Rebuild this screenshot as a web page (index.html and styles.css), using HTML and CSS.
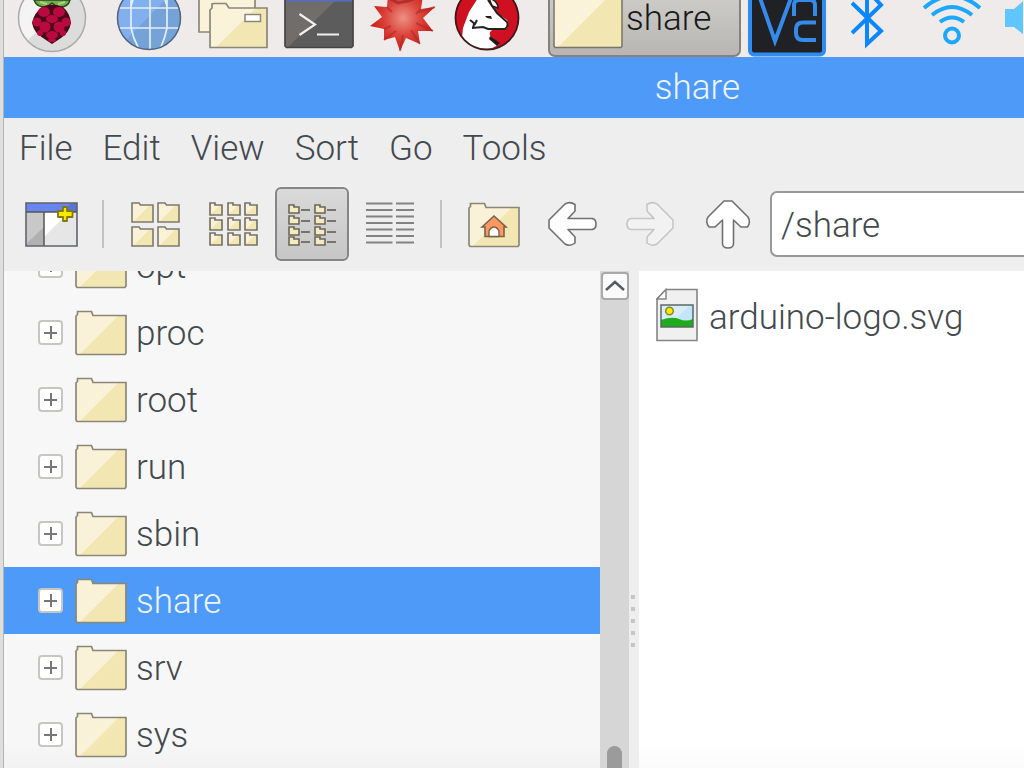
FILE: index.html
```html
<!DOCTYPE html>
<html lang="en">
<head>
<meta charset="utf-8">
<title>share</title>
<link rel="stylesheet" href="styles.css">
</head>
<body>
<svg class="defs" aria-hidden="true">
  <symbol id="folder" viewBox="0 0 52 46">
    <path d="M1.500 5.500 2.500 4.500V1.500H16.500L18 5H50.500V44.500H1.500Z" fill="#f2e6b2"/>
    <path d="M1.500 5.500 2.500 4.500V1.500H16.500L18 5H44L5 44H1.500Z" fill="#f9f2d9"/>
    <path d="M1 6 2.500 4.500V1.500H16.500L18 5.500H51V43L50 44.500H2L1 43Z" fill="none" stroke="#8a8779" stroke-width="1.700"/>
  </symbol>
  <symbol id="folder-m" viewBox="0 0 23 21">
    <path d="M1 1H8L9.500 3H22V20H1Z" fill="#f2e6b2"/>
    <path d="M1 1H8L9.500 3H19L3 19H1Z" fill="#f9f2d9"/>
    <path d="M1 1H8L9.500 3H22V20H1Z" fill="none" stroke="#7d7a6c" stroke-width="1.600"/>
  </symbol>
  <symbol id="folder-s" viewBox="0 0 14 14">
    <path d="M1 1H6V3H13V13H1Z" fill="#f2e6b2"/>
    <path d="M1 1H6V3H11L3 11H1Z" fill="#f9f2d9"/>
    <path d="M1 1H6V3H13V13H1Z" fill="none" stroke="#77746a" stroke-width="1.700"/>
  </symbol>
  <symbol id="folder-xs" viewBox="0 0 12 10">
    <path d="M1 1H6V3H11V9H1Z" fill="#f6ebc0" stroke="#69675c" stroke-width="1.600"/>
  </symbol>
</svg>

<div class="desktop">
  <div class="edge"></div>
  <div class="screen">
    <header class="taskbar">
      <button class="launch" aria-label="Menu"><svg width="70" height="57" viewBox="0 0 70 57">
        <circle cx="35" cy="18" r="33.500" fill="#dcdcdc"/>
        <path d="M1.500 18A33.500 33.500 0 0 1 30 -15L60 -8 10 41A33.500 33.500 0 0 1 1.500 18Z" fill="#f4f4f4"/>
        <circle cx="35" cy="18" r="33.500" fill="none" stroke="#aaa" stroke-width="1.500"/>
        <path d="M17 0Q20 8 30 7L35 3 40 7Q51 8 53 0Z" fill="#74ad50" stroke="#284b1b" stroke-width="1.500"/>
        <path d="M23 2 30 4M48 2 41 4" stroke="#a5d877" stroke-width="2"/>
        <path d="M25 7Q35 2 46 7 53 13 54 23 52 33 44 38L35 44 26 38Q17 33 15 23 17 13 25 7Z" fill="#4d0719"/>
        <g fill="#b80a40"><ellipse cx="27" cy="12" rx="6" ry="5"/><ellipse cx="42" cy="12" rx="6" ry="5"/><ellipse cx="35" cy="19" rx="6" ry="4"/><circle cx="20" cy="22" r="4.500"/><circle cx="49" cy="22" r="4.500"/><circle cx="28" cy="27" r="5.500"/><circle cx="42" cy="27" r="5.500"/><ellipse cx="35" cy="35" rx="6" ry="4"/><circle cx="23" cy="33" r="3"/><circle cx="46" cy="33" r="3"/><ellipse cx="35" cy="40" rx="4" ry="2"/></g>
      </svg></button>
      <button class="launch" aria-label="Web browser"><svg width="66" height="57" viewBox="0 0 66 57">
        <circle cx="33" cy="18" r="32" fill="#75a3d8"/>
        <path d="M55 -6 10 40A32 32 0 0 1 33 -14Z" fill="#82afee"/>
        <path d="M2 8H64M2 28H64M34 0V50M15 0V28Q17 38 22 47M51 0V28Q49 38 45 47M17 0 15 6M49 0 51 6" fill="none" stroke="#e3eefb" stroke-width="1.700"/>
        <circle cx="33" cy="18" r="31.500" fill="none" stroke="#52657d" stroke-width="1.500"/>
      </svg></button>
      <button class="launch" aria-label="File manager"><svg width="70" height="57" viewBox="0 0 70 57">
        <path d="M1 -5H57V32H1Z" fill="#faf3da" stroke="#8a8779" stroke-width="1.700"/>
        <path d="M12 10 14 8V4L16 3.500H28L31 8H69V47.500H12Z" fill="#f2e6b2"/>
        <path d="M12 10 14 8V4L16 3.500H28L31 8H58L18 47H12Z" fill="#faf3da"/>
        <path d="M12 10 14 8V4L16 3.500H28L31 8H69V47.500H12Z" fill="none" stroke="#8a8779" stroke-width="1.700"/>
        <path d="M47 14.500H62.500V21.500H47Z" fill="#fff" stroke="#8a8779" stroke-width="1.500"/>
      </svg></button>
      <button class="launch" aria-label="Terminal"><svg width="70" height="57" viewBox="0 0 70 57">
        <path d="M1 -4H69V46L67 48H3L1 46Z" fill="#5c5c5c"/>
        <path d="M1 0H52L4 47H1Z" fill="#716d6b"/>
        <path d="M1 0H69" stroke="#506fc5" stroke-width="3"/>
        <path d="M1 -4V46L2.500 47.500H67.500L69 46V-4" fill="none" stroke="#444" stroke-width="1.700"/>
        <path d="M15.500 14 31 24.500 15.500 35M33 34.500H55" fill="none" stroke="#f0f0f0" stroke-width="2.200"/>
      </svg></button>
      <button class="launch" aria-label="Mathematica"><svg width="66" height="57" viewBox="0 0 66 57">
        <defs><radialGradient id="star" gradientUnits="userSpaceOnUse" cx="33" cy="18" r="34"><stop offset="0" stop-color="#ec9184"/><stop offset=".5" stop-color="#dc463e"/><stop offset="1" stop-color="#cc1712"/></radialGradient></defs>
        <path d="M18 -5 17 7 4 6 12 17 0 26 14 29 14 40 25 37 30 51 36 38 50 44 48 31 63 31 53 18 65 7 51 9 53 -5Z" fill="url(#star)"/>
        <path d="M14 29 21 26M14 40 26 31M30 51 33 35M50 44 41 30M63 31 46 23M65 7 46 13M17 7 22 12M51 9 46 14" fill="none" stroke="#ad2a26" stroke-width="2" opacity=".6"/>
        <path d="M21 -1 28 3 38 1 46 -2" fill="none" stroke="#96211e" stroke-width="3" opacity=".6"/>
      </svg></button>
      <button class="launch" aria-label="Wolfram"><svg width="70" height="57" viewBox="0 0 70 57">
        <circle cx="35" cy="18" r="31.500" fill="#cf1020"/>
        <path d="M10 38 11 28 17 12 26 -2H36L45 13 55 20Q58 25 54 29L40 30Q36 33 39 37L47 44Q41 49 34 49 19 49 10 38Z" fill="#fff"/>
        <path d="M37 -2Q46 1 46 8L40 6Z" fill="#f8f8ed" stroke="#222" stroke-width="1.500"/>
        <path d="M20 28 31 27 36 29 53 29Q57 26 55 22L45 13 36 0M18 20 23 24 25 20M22 24 21 28" fill="none" stroke="#222" stroke-width="2"/>
        <path d="M33 16H39L40 19 35 18ZM38 36 48 43 45 46 37 39Z" fill="#1c1c1c"/>
        <circle cx="35" cy="18" r="31.500" fill="none" stroke="#3e171b" stroke-width="1.800"/>
      </svg></button>
      <button class="task"><svg width="70" height="57" viewBox="0 0 70 57">
        <path d="M1 -3H69V46L68 47.500H2L1 46Z" fill="#f2e6b2"/>
        <path d="M1 0H52L5 47H2L1 46Z" fill="#faf3da"/>
        <path d="M1 -3V46L2 47.500H68L69 46V-3" fill="none" stroke="#77746b" stroke-width="1.500"/>
      </svg><span>share</span></button>
      <button class="launch vnc" aria-label="VNC server"><svg width="78" height="57" viewBox="0 0 78 57">
        <rect x="2" y="-8" width="74" height="62.500" rx="4" fill="#202124" stroke="#2f8cf0" stroke-width="4"/>
        <path d="M12 -2 27 41 43 -2M46 16V5Q46 0 51 0H62Q67 0 67 5V16M68 22.500H55Q48 22.500 48 29V33Q48 40 55 40H68" fill="none" stroke="#358aea" stroke-width="4"/>
      </svg></button>
      <button class="launch bluetooth" aria-label="Bluetooth"><svg width="34" height="57" viewBox="0 0 34 57">
        <path d="M1 3 30 31 16 44V-10L30 5 1 33" fill="none" stroke="#0a86ff" stroke-width="4"/>
      </svg></button>
      <button class="launch wifi" aria-label="Wireless network"><svg width="58" height="57" viewBox="0 0 58 57">
        <g fill="none" stroke="#1ba7fb" stroke-width="4"><path d="M1 8Q29 -16 57 8M9 15Q29 -1 49 15M17 22Q29 13 41 22"/><circle cx="29" cy="35.500" r="7"/></g>
      </svg></button>
      <button class="launch" aria-label="Volume"><svg width="18" height="57" viewBox="0 0 18 57">
        <path d="M0 9H9L24 -4V39L9 27H0Z" fill="#5fc6ff"/>
      </svg></button>
    </header>

    <h1 class="title">share</h1>

    <nav class="menu">
      <button>File</button><button>Edit</button><button>View</button><button>Sort</button><button>Go</button><button>Tools</button>
    </nav>

    <div class="toolbar">
      <button class="tool" aria-label="New tab"><svg width="54" height="54" viewBox="0 0 54 54">
        <path d="M1 6H52V49H1Z" fill="#e6e6e6"/><path d="M19 15H44L19 40Z" fill="#fff"/>
        <path d="M1 15H19V49H1Z" fill="#b0b0b0"/><path d="M1 15H19V30L1 47Z" fill="#c8c8c8"/>
        <path d="M1 6H52V15H1Z" fill="#5b73d2"/><path d="M1 6H46L37 15H1Z" fill="#6886ef"/>
        <path d="M1 15H52M19 15V49" stroke="#555" stroke-width="1.500"/>
        <path d="M1 6H52V49H1Z" fill="none" stroke="#60636b" stroke-width="1.600"/>
        <path d="M38 10H42V14H47.500V20H42V24H38V20H33V14H38Z" fill="#fbe800" stroke="#81790b" stroke-width="1.800" stroke-linejoin="round"/>
      </svg></button>
      <span class="sep"></span>
      <button class="tool" aria-label="Icon view"><svg width="54" height="54" viewBox="0 0 54 54">
        <use href="#folder-m" x="2" y="5" width="23" height="21"/><use href="#folder-m" x="28" y="5" width="23" height="21"/><use href="#folder-m" x="2" y="29" width="23" height="21"/><use href="#folder-m" x="28" y="29" width="23" height="21"/>
      </svg></button>
      <button class="tool" aria-label="Thumbnail view"><svg width="54" height="54" viewBox="0 0 54 54">
        <g id="trio"><use href="#folder-s" x="2" y="5" width="14" height="14"/><use href="#folder-s" x="20" y="5" width="14" height="14"/><use href="#folder-s" x="37" y="5" width="14" height="14"/></g>
        <use href="#trio" y="15"/><use href="#trio" y="30"/>
      </svg></button>
      <button class="tool active" aria-label="Compact view" aria-pressed="true"><svg width="54" height="54" viewBox="0 0 54 54">
        <g id="pair"><use href="#folder-xs" x="3" y="7" width="12" height="10"/><use href="#folder-xs" x="29" y="7" width="12" height="10"/><path d="M16 13H25M42 13H51" stroke="#77746a" stroke-width="1.800"/></g>
        <use href="#pair" y="11"/><use href="#pair" y="22"/><use href="#pair" y="32"/>
      </svg></button>
      <button class="tool" aria-label="Detailed list view"><svg width="54" height="54" viewBox="0 0 54 54">
        <path d="M3 6.500H29.500M33 6.500H51M3 13H29.500M33 13H51M3 19.500H29.500M33 19.500H51M3 26H29.500M33 26H51M3 32.500H29.500M33 32.500H51M3 39H29.500M33 39H51M3 45.500H29.500M33 45.500H51" stroke="#828282" stroke-width="1.800"/>
      </svg></button>
      <span class="sep"></span>
      <button class="tool" aria-label="Home folder"><svg width="54" height="54" viewBox="0 0 54 54">
        <use href="#folder" x="1" y="5" width="52" height="46"/>
        <path d="M15 30 27 19 39 30H37V39.500H18V30Z" fill="#ff985c" stroke="#77624f" stroke-width="1.600"/>
        <path d="M22 39.500V34Q24 30 27 30T32 34V39.500Z" fill="#fff" stroke="#77624f" stroke-width="1.400"/>
      </svg></button>
      <button class="tool" aria-label="Back"><svg width="54" height="54" viewBox="0 0 54 54">
        <path id="arrow" d="M20 7Q25 4 30 7.500V14L23 21.500H47Q51 22 51 27T47 32.500H23L30 40V46Q25 50 20 47L4 31V23Z" fill="#fff" stroke="#707070" stroke-width="1.600" stroke-linejoin="round"/>
      </svg></button>
      <button class="tool" aria-label="Forward" disabled><svg width="54" height="54" viewBox="0 0 54 54">
        <path d="M34 7Q29 4 24 7.500V14L31 21.500H8Q4 22 4 27T8 32.500H31L24 40V46Q29 50 34 47L50 31V23Z" fill="#f2f2f2" stroke="#c6c6c6" stroke-width="1.600" stroke-linejoin="round"/>
      </svg></button>
      <button class="tool" aria-label="Up"><svg width="54" height="54" viewBox="0 0 54 54">
        <use href="#arrow" transform="translate(54 0) rotate(90)"/>
      </svg></button>
      <input class="path" type="text" value="/share" aria-label="Location">
    </div>

    <main class="panes">
      <ul class="tree">
        <li><button class="expand" aria-label="Expand opt"></button><svg width="52" height="46"><use href="#folder"/></svg><span>opt</span></li>
        <li><button class="expand" aria-label="Expand proc"></button><svg width="52" height="46"><use href="#folder"/></svg><span>proc</span></li>
        <li><button class="expand" aria-label="Expand root"></button><svg width="52" height="46"><use href="#folder"/></svg><span>root</span></li>
        <li><button class="expand" aria-label="Expand run"></button><svg width="52" height="46"><use href="#folder"/></svg><span>run</span></li>
        <li><button class="expand" aria-label="Expand sbin"></button><svg width="52" height="46"><use href="#folder"/></svg><span>sbin</span></li>
        <li class="selected"><button class="expand" aria-label="Expand share"></button><svg width="52" height="46"><use href="#folder"/></svg><span>share</span></li>
        <li><button class="expand" aria-label="Expand srv"></button><svg width="52" height="46"><use href="#folder"/></svg><span>srv</span></li>
        <li><button class="expand" aria-label="Expand sys"></button><svg width="52" height="46"><use href="#folder"/></svg><span>sys</span></li>
      </ul>
      <div class="scrollbar">
        <button aria-label="Scroll up"><svg width="24" height="24" viewBox="0 0 24 24"><path d="M3 16 12 8 21 16" fill="none" stroke="#555b5e" stroke-width="2.500"/></svg></button>
        <div class="thumb"></div>
      </div>
      <div class="splitter"><i></i><i></i><i></i><i></i><i></i></div>
      <section class="files">
        <div class="file">
          <svg width="42" height="54" viewBox="0 0 42 54">
            <path d="M10 1.500H41V52.500H1V11Z" fill="#f0f0f0" stroke="#858585" stroke-width="1.600"/>
            <path d="M10 1.500V11H1Z" fill="#fff" stroke="#858585" stroke-width="1.500"/>
            <path d="M5 17H37V39H5Z" fill="#c3e5f5"/><path d="M5 17H34L20 31H5Z" fill="#d7eefa"/>
            <path d="M5 32Q16 28 23 31T37 31V39H5Z" fill="#1eac1e"/>
            <path d="M5 17H37V39H5Z" fill="none" stroke="#586a64" stroke-width="1.500"/>
            <circle cx="13.500" cy="23" r="3.800" fill="#fbe800" stroke="#8b852b" stroke-width="1.500"/>
          </svg>
          <span>arduino-logo.svg</span>
        </div>
      </section>
    </main>
  </div>
</div>
</body>
</html>
```
FILE: styles.css
```css
* { box-sizing: border-box; }

body {
  margin: 0;
  overflow: hidden;
  font: 300 35px/42px Roboto, sans-serif;
  color: #43494d;
  background: #eee;
}

button, input {
  font: inherit;
  color: inherit;
  margin: 0;
  padding: 0;
  border: 0;
  background: none;
}

svg { display: block; flex: none; }
.defs { position: absolute; width: 0; height: 0; }

.desktop { display: flex; height: 100vh; }

.edge {
  flex: 0 0 4px;
  background: #dededc;
  border-right: 1px solid #b4b4b4;
}

.screen {
  flex: 1;
  min-width: 0;
  display: flex;
  flex-direction: column;
}

.taskbar {
  flex: 0 0 57px;
  display: flex;
  align-items: flex-start;
  gap: 16px;
  padding-left: 13px;
  overflow: hidden;
  background: #eeebea;
}

.launch { flex: none; height: 57px; }
.launch:nth-child(2) { margin-left: 13px; }

.task {
  flex: 0 0 193px;
  height: 57px;
  display: flex;
  align-items: flex-start;
  gap: 3px;
  margin-left: 10px;
  padding-left: 3px;
  border: 2px solid #85827e;
  border-top: 0;
  border-radius: 0 0 7px 7px;
  background: linear-gradient(#cbcac6, #b8b6b2);
  color: #17191a;
  line-height: 38px;
}

.vnc { margin-left: -9px; }
.bluetooth { margin-left: 9px; }
.wifi { margin-left: 22px; margin-right: 8px; }

.title {
  flex: none;
  margin: 0;
  padding: 10px 0 9px 367px;
  background: #4d9af8;
  color: #eef5ff;
  font-size: 35px;
  font-weight: 300;
  text-align: center;
}

.menu {
  flex: none;
  display: flex;
  gap: 30px;
  padding: 10px 15px;
}

.toolbar {
  flex: none;
  display: flex;
  align-items: center;
  gap: 4px;
  padding: 7px 0 10px 11px;
}

.tool {
  flex: 0 0 74px;
  height: 74px;
  display: flex;
  align-items: center;
  justify-content: center;
  border-radius: 6px;
}

.tool.active {
  border: 2px solid #858585;
  background: linear-gradient(#d9d9d9, #c6c6c6);
  box-shadow: 0 0 2px #fff;
}

.sep {
  flex: 0 0 2px;
  height: 48px;
  margin: 0 11px 0 9px;
  background: #c2c2c2;
}

.path {
  flex: 1;
  min-width: 0;
  height: 66px;
  margin-left: 1px;
  padding: 2px 0 0 9px;
  border: 2px solid #999;
  border-right: 0;
  border-radius: 7px 0 0 7px;
  background: #fff;
}

.panes {
  flex: 1;
  min-height: 0;
  display: grid;
  grid-template-columns: 596px 29px 10px 1fr;
}

.tree {
  margin: 0;
  padding: 0;
  list-style: none;
  min-height: 0;
  overflow: hidden;
  display: flex;
  flex-direction: column;
  justify-content: flex-end;
  background: linear-gradient(#f7f7f7 95%, #f2f2f2);
}

.tree li {
  flex: 0 0 67px;
  display: flex;
  align-items: center;
  padding-left: 34px;
}

.tree svg { margin: 0 9px 0 12px; }
.tree span { padding-top: 3px; }
.tree .selected { background: #4d9af8; color: #eef5ff; }

.expand {
  flex: 0 0 25px;
  height: 25px;
  border: 2px solid #c6c6c2;
  border-radius: 4px;
  background:
    linear-gradient(#777, #777) center / 13px 2px no-repeat,
    linear-gradient(#777, #777) center / 2px 13px no-repeat,
    #fff;
}

.scrollbar {
  min-height: 0;
  display: flex;
  flex-direction: column;
  align-items: center;
  justify-content: space-between;
  overflow: hidden;
  background: #d6d6d6;
}

.scrollbar button {
  margin-top: 1px;
  border: 2px solid #a9a9a9;
  border-radius: 4px;
  background: #fafafa;
}

.thumb {
  width: 15px;
  height: 22px;
  border-radius: 8px 8px 0 0;
  background: #9b9b9b;
}

.splitter {
  display: flex;
  flex-direction: column;
  align-items: center;
  gap: 8px;
  padding: 324px 2px 0 0;
  background: #eee;
}

.splitter i { width: 4px; height: 4px; background: #c6c6c2; }

.files {
  padding: 17px;
  background: linear-gradient(#fff 95%, #fafafa);
}

.file {
  display: flex;
  align-items: center;
  gap: 11px;
}

.file span { padding-top: 5px; }
```
